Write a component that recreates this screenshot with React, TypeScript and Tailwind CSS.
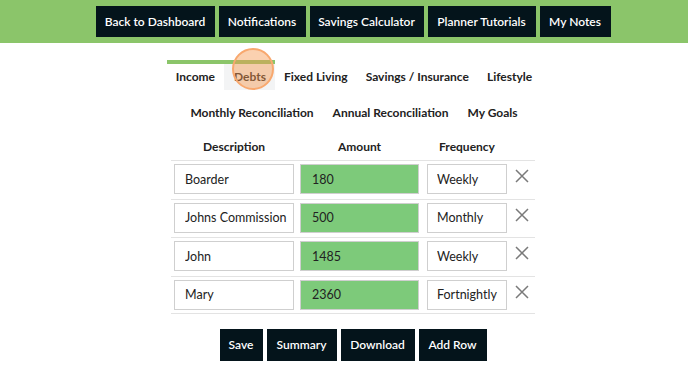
import React from "react";

const navItems = [
  { label: "Back to Dashboard", w: "w-[119px]" },
  { label: "Notifications", w: "w-[87px]" },
  { label: "Savings Calculator", w: "w-[114px]" },
  { label: "Planner Tutorials", w: "w-[108px]" },
  { label: "My Notes", w: "w-[71px]" },
];

const actions = [
  { label: "Save", w: "w-[43px]" },
  { label: "Summary", w: "w-[70px]" },
  { label: "Download", w: "w-[74px]" },
  { label: "Add Row", w: "w-[68px]" },
];

const rows = [
  { desc: "Boarder", amount: "180", freq: "Weekly" },
  { desc: "Johns Commission", amount: "500", freq: "Monthly" },
  { desc: "John", amount: "1485", freq: "Weekly" },
  { desc: "Mary", amount: "2360", freq: "Fortnightly" },
];

function CloseIcon() {
  return (
    <svg width="14" height="14" viewBox="0 0 14 14" className="block">
      <path d="M1 1L13 13M13 1L1 13" stroke="#7a7a7a" strokeWidth="1.5" fill="none" />
    </svg>
  );
}

export default function App() {
  return (
    <div className="min-h-[384px] bg-white text-[#222] font-['Lato','Liberation_Sans',sans-serif]">
      {/* top nav */}
      <div className="h-[43px] bg-[#8bc56a] flex justify-center pl-[18px] pt-[6px]">
        <div className="flex gap-[4px]">
          {navItems.map((n) => (
            <button key={n.label} className={`${n.w} h-[31px] bg-[#04141b] text-white text-[12px] font-semibold leading-none`}>
              {n.label}
            </button>
          ))}
        </div>
      </div>

      <div className="flex flex-col items-center pl-[20px]">
        {/* tabs */}
        <div className="mt-[17px] flex text-[12px] font-bold">
          <div className="border-t-4 border-[#8bc56a] h-[30px] px-[9px] flex items-center">Income</div>
          <div className="relative border-t-4 border-[#8bc56a] h-[30px] pl-[10px] pr-[9px] flex items-center bg-[#f3f4f5]">
            Debts
            <span className="absolute left-[8px] top-[-16px] w-[42px] h-[42px] rounded-full bg-[#f79a50]/45 border-2 border-[#f8a86e]" />
          </div>
          <div className="border-t-4 border-transparent h-[30px] px-[9px] flex items-center">Fixed Living</div>
          <div className="border-t-4 border-transparent h-[30px] px-[9px] flex items-center">Savings / Insurance</div>
          <div className="border-t-4 border-transparent h-[30px] px-[9px] flex items-center">Lifestyle</div>
        </div>
        <div className="mt-[10px] flex text-[12px] font-bold">
          <div className="h-[26px] px-[9.5px] flex items-center">Monthly Reconciliation</div>
          <div className="h-[26px] px-[9.5px] flex items-center">Annual Reconciliation</div>
          <div className="h-[26px] px-[9.5px] flex items-center">My Goals</div>
        </div>
      </div>

      <div className="flex flex-col items-center pl-[18px]">
        {/* table */}
        <div className="mt-[8px] w-[364px] text-[12px]">
          <div className="h-[26px] flex items-center px-[3px] font-bold">
            <div className="w-[120px] text-center">Description</div>
            <div className="w-[119px] ml-[6px] text-center">Amount</div>
            <div className="w-[80px] ml-[8px] text-center">Frequency</div>
          </div>
          {rows.map((r, i) => (
            <div
              key={i}
              className={`h-[38.5px] border-t border-[#e3e3e3] flex items-start pt-[3px] px-[3px] ${i === rows.length - 1 ? "border-b" : ""}`}
            >
              <input
                readOnly
                value={r.desc}
                className="w-[120px] h-[30px] border border-[#cfcfcf] bg-white pl-[10px] text-[12.5px] outline-none"
              />
              <input
                readOnly
                value={r.amount}
                className="w-[119px] h-[30px] ml-[6px] border border-[#cfcfcf] bg-[#7dca7a] pl-[11px] text-[12.5px] outline-none"
              />
              <input
                readOnly
                value={r.freq}
                className="w-[80px] h-[30px] ml-[8px] border border-[#cfcfcf] bg-white pl-[9px] text-[12.5px] outline-none"
              />
              <button className="ml-[8px] mt-[5px]">
                <CloseIcon />
              </button>
            </div>
          ))}
        </div>

        {/* actions */}
        <div className="mt-[15px] flex gap-[4px]">
          {actions.map((b) => (
            <button key={b.label} className={`${b.w} h-[32px] bg-[#04141b] text-white text-[12px] font-semibold leading-none`}>
              {b.label}
            </button>
          ))}
        </div>
      </div>
    </div>
  );
}
